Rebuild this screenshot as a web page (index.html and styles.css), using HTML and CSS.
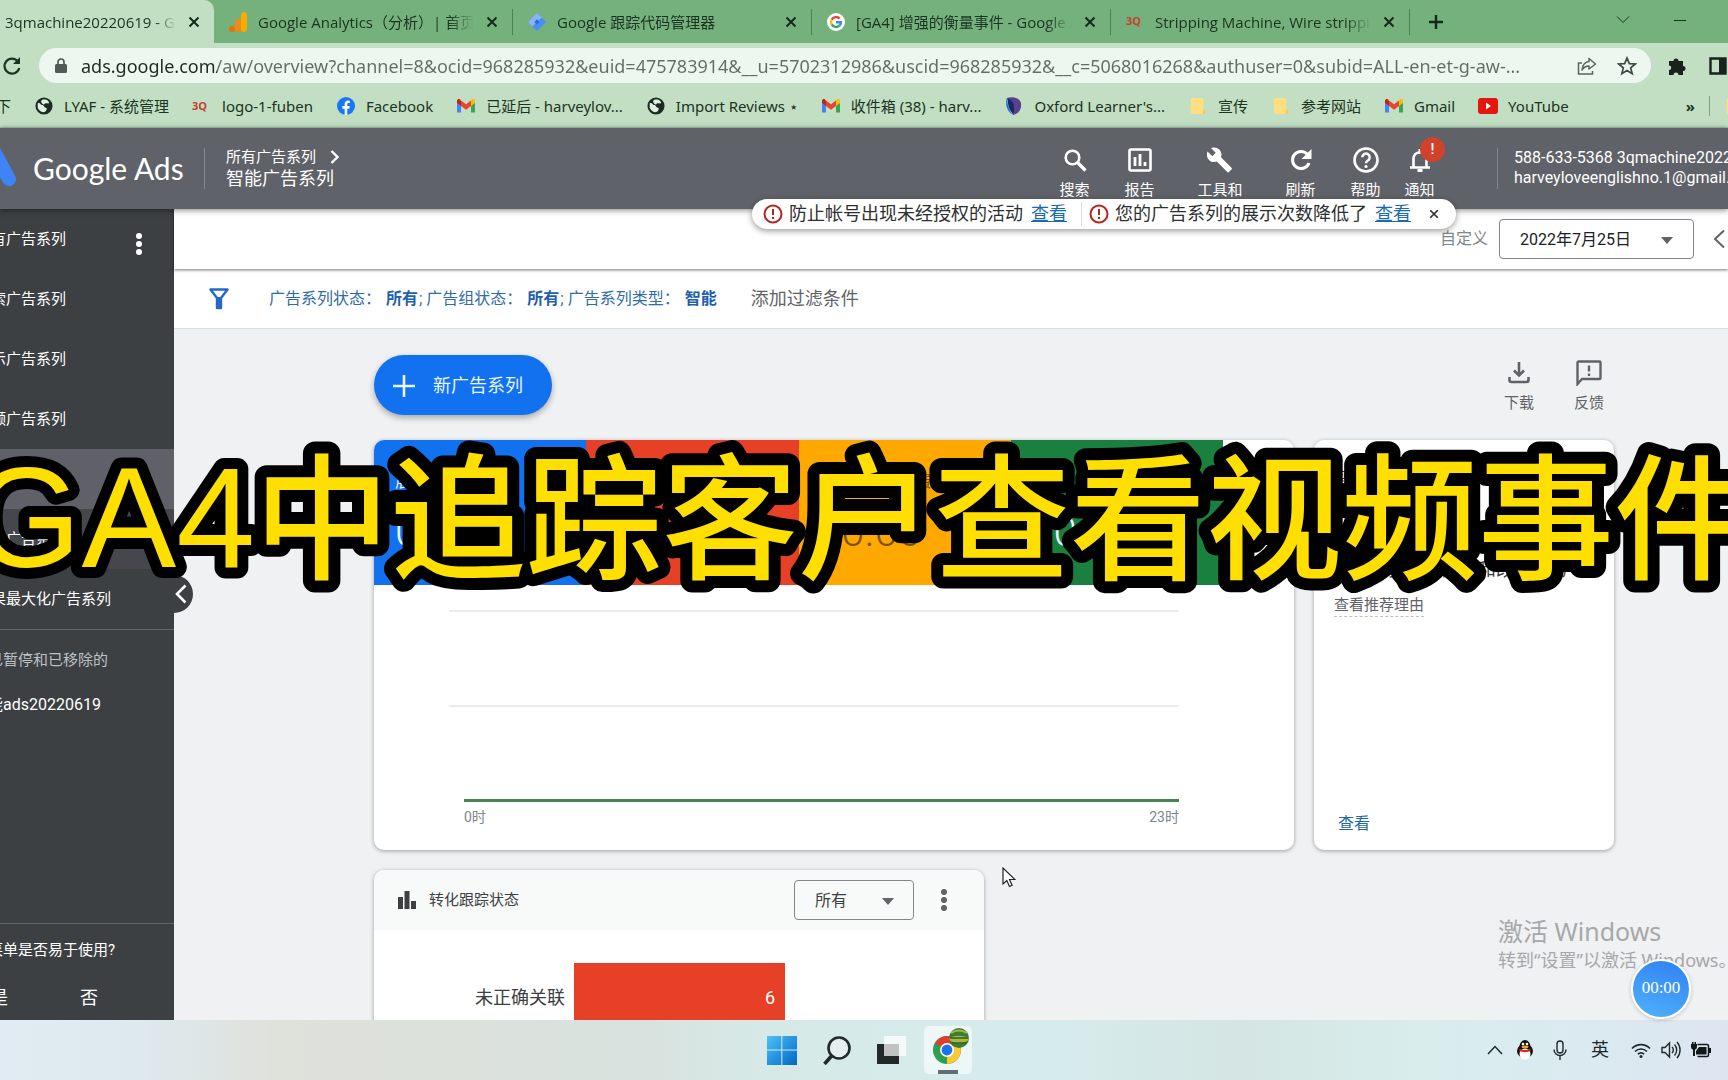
FILE: index.html
```html
<!DOCTYPE html>
<html lang="zh-CN">
<head>
<meta charset="utf-8">
<title>Google Ads</title>
<link rel="stylesheet" href="styles.css">
</head>
<body>
<svg class="defs" aria-hidden="true">
  <symbol id="i-close" viewBox="0 0 12 12"><path d="M1.500 1.500l9 9M10.500 1.500l-9 9" fill="none" stroke="currentColor" stroke-width="2"/></symbol>
  <symbol id="i-gmail" viewBox="0 0 20 16"><path d="M1 3v11.500h4V7z" fill="#4285f4"/><path d="M19 3v11.500h-4V7z" fill="#34a853"/><path d="M15 2.500V8l4-3V3c0-2-2-2.500-3-1.500z" fill="#fbbc04"/><path d="M1 3v2l4 3V2.500L4 1.500C3 .5 1 1 1 3z" fill="#c5221f"/><path d="M5 2.500V8l5 3.800L15 8V2.500l-5 3.800z" fill="#ea4335"/></symbol>
  <symbol id="i-globe" viewBox="0 0 20 20"><circle cx="10" cy="10" r="9.500" fill="#1c2a22"/><path d="M3 7c3-1 3 2 5 2s2 3 4 3 1 4-2 5c-3 0-6-2-7-5z" fill="#dff0e0"/><path d="M8 3c2 0 5-1 7 2s-1 2-3 2-1 2-3 1-3-4-1-5z" fill="#dff0e0"/></symbol>
  <symbol id="i-folder" viewBox="0 0 18 20"><path d="M2 1h11a2 2 0 0 1 2 2v10l2 3v3H3a2 2 0 0 1-2-2V2z" fill="#ffdf80"/><path d="M15 13l2 3v3h-3z" fill="#f4c95c"/></symbol>
  <symbol id="i-alert" viewBox="0 0 20 20"><circle cx="10" cy="10" r="8.500" fill="none" stroke="#b3261e" stroke-width="2"/><path d="M10 5v6M10 13v2" stroke="#b3261e" stroke-width="2"/></symbol>
  <symbol id="i-dots" viewBox="0 0 6 22"><circle cx="3" cy="3" r="3" fill="currentColor"/><circle cx="3" cy="11" r="3" fill="currentColor"/><circle cx="3" cy="19" r="3" fill="currentColor"/></symbol>
</svg>

<div class="tabs">
  <div class="tab tab-active"><span class="tab-title">3qmachine20220619 - Goo</span><button class="tab-close" aria-label="关闭"><svg width="12" height="12"><use href="#i-close"/></svg></button></div>
  <div class="tab">
    <svg class="fav" viewBox="0 0 18 20"><rect x="12" y="0" width="6" height="20" rx="3" fill="#f9ab00"/><rect x="6" y="7" width="6" height="13" rx="2" fill="#ee8a1d"/><circle cx="3" cy="17" r="3" fill="#e37400"/></svg>
    <span class="tab-title">Google Analytics（分析）| 首页</span><button class="tab-close" aria-label="关闭"><svg width="12" height="12"><use href="#i-close"/></svg></button></div>
  <div class="tab">
    <svg class="fav" viewBox="0 0 20 20"><path d="M10 0l10 10-10 10L0 10z" fill="#4a8df6"/><path d="M10 0L0 10l5 5L15 5z" fill="#8ab4f8"/><path d="M10 7l3 3-3 3-3-3z" fill="#246fdb"/></svg>
    <span class="tab-title">Google 跟踪代码管理器</span><button class="tab-close" aria-label="关闭"><svg width="12" height="12"><use href="#i-close"/></svg></button></div>
  <div class="tab">
    <svg class="fav" viewBox="0 0 20 20"><circle cx="10" cy="10" r="10" fill="#fff"/><g fill="none" stroke-width="2.600"><path d="M14 6.200A5.500 5.500 0 0 0 5.200 7.300" stroke="#ea4335"/><path d="M5.200 7.300a5.500 5.500 0 0 0 0 5.400" stroke="#fbbc04"/><path d="M5.200 12.700a5.500 5.500 0 0 0 8.600 1.400" stroke="#34a853"/><path d="M13.800 14.100A5.500 5.500 0 0 0 15.500 10.300H10" stroke="#4285f4"/></g></svg>
    <span class="tab-title">[GA4] 增强的衡量事件 - Google A</span><button class="tab-close" aria-label="关闭"><svg width="12" height="12"><use href="#i-close"/></svg></button></div>
  <div class="tab">
    <span class="fav mark">3Q</span>
    <span class="tab-title">Stripping Machine, Wire strippin</span><button class="tab-close" aria-label="关闭"><svg width="12" height="12"><use href="#i-close"/></svg></button></div>
  <button class="tab-new" aria-label="新标签页"><svg width="16" height="16" viewBox="0 0 16 16"><path d="M8 1v14M1 8h14" stroke="currentColor" stroke-width="2.400"/></svg></button>
  <div class="win">
    <svg width="14" height="10" viewBox="0 0 14 10"><path d="M1 1.500l6 6 6-6" fill="none" stroke="currentColor"/></svg>
    <svg width="14" height="10" viewBox="0 0 14 10"><path d="M1 5.500h12" stroke="currentColor"/></svg>
  </div>
</div>

<div class="toolbar">
  <button class="plain" aria-label="重新加载"><svg width="20" height="20" viewBox="0 0 20 20"><path d="M16 5.500A7.500 7.500 0 1 0 17.300 12" fill="none" stroke="currentColor" stroke-width="2.200"/><path d="M18 1v7h-7z" fill="currentColor"/></svg></button>
  <div class="omnibox">
    <svg width="12" height="16" viewBox="0 0 12 16"><rect y="6" width="12" height="9" rx="1.500" fill="#4f5b54"/><path d="M3 7V4a3 3 0 0 1 6 0v3" fill="none" stroke="#4f5b54" stroke-width="1.700"/></svg>
    <input class="url" type="text" aria-label="地址" value="ads.google.com/aw/overview?channel=8&amp;ocid=968285932&amp;euid=475783914&amp;__u=5702312986&amp;uscid=968285932&amp;__c=5068016268&amp;authuser=0&amp;subid=ALL-en-et-g-aw-...">
    <svg width="20" height="20" viewBox="0 0 20 20"><path d="M5 7H1.500v11h14v-3" fill="none" stroke="#59645d" stroke-width="1.500"/><path d="M12 2.500l6.500 5.500-6.500 5v-3c-3 0-5 1-7 4 .5-5 3-8 7-8.500z" fill="none" stroke="#59645d" stroke-width="1.500" stroke-linejoin="round"/></svg>
    <svg width="20" height="20" viewBox="0 0 20 20"><path d="M10 2l2.300 5.600 6 .4-4.600 3.900 1.500 5.900L10 14.600l-5.200 3.200 1.500-5.900L1.700 8l6-.4z" fill="none" stroke="#3f4943" stroke-width="1.700"/></svg>
  </div>
  <svg width="18" height="20" viewBox="0 0 18 20"><path d="M1 5h4.500a2.500 2.500 0 1 1 5 0H15v5a2.500 2.500 0 0 1 0 5v4h-4.500a2.500 2.500 0 0 0-5 0H1v-5a2.200 2.200 0 0 0 0-4.500z" fill="#18231c"/></svg>
  <svg width="18" height="18" viewBox="0 0 18 18"><path d="M1.500 1.500h15v15h-15z" fill="none" stroke="#18231c" stroke-width="2.400"/><path d="M10 1h7v16h-7z" fill="#18231c"/></svg>
</div>

<nav class="bookmarks">
  <a href="#">下</a>
  <a href="#"><svg class="bm" viewBox="0 0 20 20"><use href="#i-globe"/></svg>LYAF - 系统管理</a>
  <a href="#"><span class="bm mark">3Q</span>logo-1-fuben</a>
  <a href="#"><svg class="bm" viewBox="0 0 20 20"><circle cx="10" cy="10" r="10" fill="#1877f2"/><path d="M8.500 20v-7H6v-3h2.500V8c0-2.700 1.500-4 3.800-4l1.900.2v2.600h-1.300c-1.200 0-1.500.6-1.500 1.400V10h2.800l-.5 3h-2.300v7z" fill="#fff"/></svg>Facebook</a>
  <a href="#"><svg class="bm" viewBox="0 0 20 16"><use href="#i-gmail"/></svg>已延后 - harveylov...</a>
  <a href="#"><svg class="bm" viewBox="0 0 20 20"><use href="#i-globe"/></svg>Import Reviews ⋆</a>
  <a href="#"><svg class="bm" viewBox="0 0 20 16"><use href="#i-gmail"/></svg>收件箱 (38) - harv...</a>
  <a href="#"><svg class="bm" viewBox="0 0 20 20"><path d="M2 1c9-2 16 1 16 8 0 6-4 10-9 11z" fill="#5b3f8c"/><path d="M2 1c1 6 1 12 7 19C2 16 0 8 2 1z" fill="#1c6fd0"/><path d="M3 2c6 2 9 8 6 17C4 14 3 8 3 2z" fill="#122a6b"/></svg>Oxford Learner's...</a>
  <a href="#"><svg class="bm" viewBox="0 0 18 20"><use href="#i-folder"/></svg>宣传</a>
  <a href="#"><svg class="bm" viewBox="0 0 18 20"><use href="#i-folder"/></svg>参考网站</a>
  <a href="#"><svg class="bm" viewBox="0 0 20 16"><use href="#i-gmail"/></svg>Gmail</a>
  <a href="#"><svg class="bm" viewBox="0 0 20 16"><rect width="20" height="16" rx="3" fill="#e5160b"/><path d="M8 4.500l5 3.500-5 3.500z" fill="#fff"/></svg>YouTube</a>
  <div class="more"><b>»</b><i></i><svg class="bm" viewBox="0 0 18 20"><use href="#i-folder"/></svg></div>
</nav>

<header class="header">
  <svg class="logo" width="18" height="40" viewBox="0 0 18 40"><path d="M-8 0l17 31" stroke="#3f83f8" stroke-width="14" stroke-linecap="round"/></svg>
  <span class="brand">Google Ads</span>
  <div class="crumbs">
    <a href="#">所有广告系列 <svg width="9" height="14" viewBox="0 0 9 14"><path d="M1.500 1l6 6-6 6" fill="none" stroke="#fff" stroke-width="2.400"/></svg></a>
    <span class="crumb-now">智能广告系列</span>
  </div>
  <div class="tools">
    <button><svg viewBox="0 0 26 26"><circle cx="10.500" cy="10.500" r="6.800" fill="none" stroke="#fff" stroke-width="2.600"/><path d="M15.500 15.500l8 8" stroke="#fff" stroke-width="3.200"/></svg>搜索</button>
    <button><svg viewBox="0 0 26 26"><rect x="2.500" y="2.500" width="21" height="21" rx="1.500" fill="none" stroke="#fff" stroke-width="2.600"/><path d="M8 10v9M13 7v12M18 15v4" stroke="#fff" stroke-width="2.800"/></svg>报告</button>
    <button class="wide"><svg viewBox="0 0 26 26"><path d="M24.500 20.700L14 10.300c1-2.700.4-5.700-1.700-7.800C10 .3 6.600-.2 3.900 1.100l4.800 4.700-3.400 3.400L.5 4.500c-1.200 2.700-.8 6.100 1.500 8.400 2.100 2.100 5.200 2.700 7.800 1.700l10.500 10.500c.5.500 1.200.5 1.600 0l2.600-2.700c.6-.5.600-1.300 0-1.700z" fill="#fff"/></svg>工具和</button>
    <button><svg viewBox="0 0 26 26"><path d="M19.500 7.500A8.500 8.500 0 1 0 21 16" fill="none" stroke="#fff" stroke-width="3"/><path d="M23.500 2v10h-10z" fill="#fff"/></svg>刷新</button>
    <button><svg viewBox="0 0 26 26"><circle cx="13" cy="13" r="11.500" fill="none" stroke="#fff" stroke-width="2.600"/><path d="M9.300 10.300a3.700 3.700 0 1 1 5.600 3.200c-1.300.8-1.900 1.300-1.900 2.800" fill="none" stroke="#fff" stroke-width="2.500"/><circle cx="13" cy="19.500" r="1.600" fill="#fff"/></svg>帮助</button>
    <button class="narrow"><svg viewBox="0 0 26 26"><path d="M6.500 20v-8c0-4 2.500-6.500 6.500-6.500s6.500 2.500 6.500 6.500v8M3 20.500h20" fill="none" stroke="#fff" stroke-width="2.600"/><path d="M13 2v4M10.500 23.500h5" stroke="#fff" stroke-width="3"/></svg>通知<span class="badge">!</span></button>
  </div>
  <div class="account"><span>588-633-5368 3qmachine20220619</span><span>harveyloveenglishno.1@gmail.com</span></div>
  <div class="notice">
    <svg width="20" height="20"><use href="#i-alert"/></svg><span>防止帐号出现未经授权的活动</span><a href="#">查看</a>
    <i></i>
    <svg width="20" height="20"><use href="#i-alert"/></svg><span>您的广告系列的展示次数降低了</span><a href="#">查看</a>
    <button class="plain notice-close" aria-label="关闭"><svg width="10" height="10"><use href="#i-close"/></svg></button>
  </div>
</header>

<div class="work">
  <aside class="side">
    <button class="plain side-menu" aria-label="更多"><svg width="6" height="22"><use href="#i-dots"/></svg></button>
    <nav>
      <a href="#">所有广告系列</a>
      <a href="#">搜索广告系列</a>
      <a href="#">展示广告系列</a>
      <a href="#">视频广告系列</a>
      <a href="#" class="on">智能广告系列</a>
      <a href="#" class="sub">所有广告系列</a>
      <a href="#">效果最大化广告系列</a>
    </nav>
    <p class="side-group">已暂停和已移除的</p>
    <a href="#" class="side-camp">智能ads20220619</a>
    <div class="side-ask">
      <p>菜单是否易于使用?</p>
      <div class="side-answers"><button class="plain">是</button><button class="plain">否</button></div>
    </div>
  </aside>
  <button class="collapse" aria-label="收起"><svg width="12" height="20" viewBox="0 0 12 20"><path d="M10.500 1.500L2 10l8.500 8.500" fill="none" stroke="#fff" stroke-width="2.600"/></svg></button>

  <main class="main">
    <div class="datebar">
      <span>自定义</span>
      <button class="date">2022年7月25日<i class="caret"></i></button>
      <svg class="prev" width="12" height="20" viewBox="0 0 12 20"><path d="M11 1.500L2 10l9 8.500" fill="none" stroke="#5f6368" stroke-width="2"/></svg>
    </div>
    <div class="filters">
      <svg width="20" height="22" viewBox="0 0 20 22"><path d="M1.500 1.500h17L12 10v10H8V10z" fill="none" stroke="#2668c8" stroke-width="2.400" stroke-linejoin="round"/><path d="M8 9h4v11H8z" fill="#2668c8"/></svg>
      <p>广告系列状态： <b>所有</b>; 广告组状态： <b>所有</b>; 广告系列类型： <b>智能</b></p>
      <a href="#">添加过滤条件</a>
    </div>

    <div class="content">
      <div class="actions">
        <button class="fab"><svg width="22" height="22" viewBox="0 0 22 22"><path d="M11 0v22M0 11h22" stroke="currentColor" stroke-width="2.600"/></svg>新广告系列</button>
        <button class="act"><svg width="26" height="26" viewBox="0 0 26 26"><path d="M13 2v13M8 10.500l5 5 5-5M3.500 17v3a2 2 0 0 0 2 2h15a2 2 0 0 0 2-2v-3" fill="none" stroke="#5f6368" stroke-width="2.600"/></svg>下载</button>
        <button class="act"><svg width="26" height="26" viewBox="0 0 26 26"><path d="M1.500 24V2.500a1 1 0 0 1 1-1h21a1 1 0 0 1 1 1V18a1 1 0 0 1-1 1H6z" fill="none" stroke="#5f6368" stroke-width="2.400"/><path d="M13 5.500v6M13 13.500v2.600" stroke="#5f6368" stroke-width="2.400"/></svg>反馈</button>
      </div>

      <div class="cards">
        <section class="card overview">
          <div class="tiles">
            <div class="tile blue"><span>展示次数</span><strong>0</strong></div>
            <div class="tile red"><span>点击次数</span><strong>0</strong></div>
            <div class="tile amber"><span>平均每次点击费用</span><strong>¥0.00</strong></div>
            <div class="tile green"><span>费用</span><strong>¥0.00</strong></div>
          </div>
          <div class="chart">
            <div class="grid-line"></div>
            <div class="grid-line"></div>
            <div class="series"></div>
            <div class="axis"><span>0时</span><span>23时</span></div>
          </div>
        </section>
        <section class="card tip">
          <h2>您的优化得分</h2>
          <h3>获取更多广告点击和改进服务</h3>
          <span class="reason">查看推荐理由</span>
          <a href="#">查看</a>
        </section>
      </div>

      <section class="card track">
        <div class="track-head">
          <svg width="18" height="18" viewBox="0 0 18 18"><path d="M0 6h5v12H0zM6.500 0h5v18h-5zM13 10h5v8h-5z" fill="#3c4043"/></svg>
          <h2>转化跟踪状态</h2>
          <label class="pick"><select aria-label="状态"><option>所有</option></select><i class="caret"></i></label>
          <button class="plain" aria-label="更多"><svg width="6" height="22"><use href="#i-dots"/></svg></button>
        </div>
        <div class="track-row"><span>未正确关联</span><div class="bar">6</div></div>
      </section>
    </div>
  </main>
</div>

<footer class="taskbar">
  <div class="apps">
    <svg width="30" height="30" viewBox="0 0 30 30"><defs><linearGradient id="w" x2="1" y2="1"><stop stop-color="#4cc2f7"/><stop offset="1" stop-color="#0067c8"/></linearGradient></defs><path d="M0 1h14.300v13.500H0zM15.300 1H30v13.500H15.300zM0 15.500h14.300V30H0zM15.300 15.500H30V30H15.300z" fill="url(#w)"/></svg>
    <svg width="30" height="30" viewBox="0 0 30 30"><circle cx="17" cy="13" r="10.500" fill="#e6eeee" stroke="#1f2a2c" stroke-width="2.600"/><path d="M9.500 21L2.500 29" stroke="#1f2a2c" stroke-width="3.600"/></svg>
    <svg width="30" height="30" viewBox="0 0 30 30"><path d="M0 9h22v20H0z" fill="#23282a"/><path d="M7 1h22v20H7z" fill="#fff" fill-opacity=".72"/></svg>
    <div class="app-on">
      <svg width="36" height="38" viewBox="0 0 36 38"><circle cx="14" cy="22" r="14" fill="#2f9e4f"/><path d="M14 22L2 15a14 14 0 0 1 24-0.500z" fill="#e33b2e"/><path d="M14 22l12-7a14 14 0 0 1-12 21z" fill="#fcc934"/><circle cx="14" cy="22" r="7" fill="#fff"/><circle cx="14" cy="22" r="5.400" fill="#1a73e8"/><circle cx="26" cy="10" r="10" fill="#3f7d35"/><path d="M18 5c5-3 11-3 16 0" fill="none" stroke="#a8b93c" stroke-width="2"/><path d="M16.500 10c6-3 12-3 19 0v2c-6 5-13 5-19 0z" fill="#a8b93c"/><path d="M17 10h18M19 15h14" stroke="#2c5f2a" stroke-width="1.500"/></svg>
    </div>
  </div>
  <div class="tray">
    <svg width="16" height="10" viewBox="0 0 16 10"><path d="M1 9l7-7.500L15 9" fill="none" stroke="#1f2a2c" stroke-width="1.500"/></svg>
    <svg width="16" height="20" viewBox="0 0 16 20"><ellipse cx="8" cy="11" rx="8" ry="7" fill="#111"/><ellipse cx="8" cy="6.500" rx="5.500" ry="6.500" fill="#111"/><ellipse cx="8" cy="14" rx="5.500" ry="5.500" fill="#fff"/><path d="M2.500 8.500c3 2 8 2 11 0v2.500c-3 1.500-8 1.500-11 0z" fill="#e2231a"/><ellipse cx="8" cy="7" rx="3.500" ry="1.400" fill="#f7a11a"/><circle cx="6" cy="4" r="1.300" fill="#fff"/><circle cx="10" cy="4" r="1.300" fill="#fff"/></svg>
    <svg width="14" height="20" viewBox="0 0 14 20"><rect x="4" y="1" width="6" height="12" rx="3" fill="none" stroke="#1f2a2c" stroke-width="1.400"/><path d="M1 9.500a6 6 0 0 0 12 0M7 15.500V20" fill="none" stroke="#1f2a2c" stroke-width="1.400"/></svg>
    <span>英</span>
    <svg width="20" height="16" viewBox="0 0 20 16"><path d="M1 6.500a12.500 12.500 0 0 1 18 0M4 9.500a8.500 8.500 0 0 1 12 0M6.800 12.200a4.500 4.500 0 0 1 6.400 0" fill="none" stroke="#1f2a2c" stroke-width="1.600"/><circle cx="10" cy="14.500" r="1.500" fill="#1f2a2c"/></svg>
    <svg width="20" height="18" viewBox="0 0 20 18"><path d="M1 6.500h3L8.500 2v14L4 11.500H1z" fill="none" stroke="#1f2a2c" stroke-width="1.400"/><path d="M11 6a4 4 0 0 1 0 6M13.500 3.500a8 8 0 0 1 0 11M16 1a12 12 0 0 1 0 16" fill="none" stroke="#1f2a2c" stroke-width="1.400"/></svg>
    <svg width="20" height="16" viewBox="0 0 20 16"><path d="M6.500 2.500H16a1.500 1.500 0 0 1 1.500 1.500v9a1.500 1.500 0 0 1-1.500 1.500H6.500" fill="none" stroke="#10181a" stroke-width="1.500"/><path d="M8 5h7.500v7.500H5V9zM18 6h2v5h-2zM0 2h6v3a3 3 0 0 1-2 2.800V14H2V7.800A3 3 0 0 1 0 5zM1 0h1.500v2H1zM3.500 0H5v2H3.500z" fill="#10181a"/></svg>
  </div>
</footer>

<div class="watermark"><span>激活 Windows</span><small>转到“设置”以激活 Windows。</small></div>
<div class="timer">00:00</div>
<svg class="cursor" width="14" height="21" viewBox="0 0 14 21"><path d="M1 1v16l3.800-3.500L7.500 19.500l2.600-1.200-2.600-5.800H13z" fill="#fff" stroke="#222" stroke-width="1.200"/></svg>
<svg class="caption"><text x="-29" y="137"><tspan class="latin">GA4</tspan><tspan x="254" y="139">中追踪客户查看视频事件</tspan></text></svg>
</body>
</html>
```
FILE: styles.css
```css
* { box-sizing: border-box; margin: 0; padding: 0; }
body {
  position: relative;
  display: flex;
  flex-direction: column;
  height: 100vh;
  overflow: hidden;
  font: 15px/20px Roboto, "Noto Sans CJK SC", sans-serif;
  color: #3c4043;
}
a { color: inherit; text-decoration: none; white-space: nowrap; }
button, input, select { font: inherit; color: inherit; border: 0; background: none; }
svg { display: block; flex: none; }
i { font-style: normal; }
.defs { position: absolute; width: 0; height: 0; }
.plain { display: flex; align-items: center; }
.mark { color: #c5402f; font: bold 11px/18px "Open Sans", sans-serif; }

/* browser frame */
.tabs, .toolbar, .bookmarks {
  display: flex;
  align-items: center;
  flex: none;
  font-family: "Open Sans", "Noto Sans CJK SC", sans-serif;
  color: #1b3321;
}
.tabs { height: 43px; background: #75b17c; }
.tab {
  display: flex;
  align-items: center;
  flex: none;
  width: 299px;
  height: 26px;
  padding: 0 14px 0 15px;
  border-right: 1px solid #4a8353;
}
.tab-active {
  width: 214px;
  height: 43px;
  padding: 0 14px 0 5px;
  border: 0;
  border-radius: 0 10px 0 0;
  background: #c2dfc4;
}
.fav { width: 18px; height: 20px; margin-right: 11px; flex: none; }
.tab-title {
  flex: 1;
  overflow: hidden;
  white-space: nowrap;
  margin-right: 12px;
  mask-image: linear-gradient(to right, #000 88%, transparent);
}
.tab-close { width: 12px; height: 12px; color: #14291a; }
.tab-new { margin-left: 18px; color: #14291a; }
.win { display: flex; gap: 43px; margin: 0 41px 4px auto; }

.toolbar { height: 46px; background: #c2dfc4; gap: 20px; overflow: hidden; padding: 0 0 1px 2px; }
.omnibox {
  display: flex;
  align-items: center;
  flex: 1;
  height: 35px;
  gap: 20px;
  margin-right: -3px;
  padding: 0 14px 0 16px;
  border-radius: 18px;
  background: #edf6ef;
}
.toolbar > .plain { margin-right: -3px; }
.toolbar > svg:last-child { margin: 0 1px 0 3px; }
.url {
  flex: 1;
  min-width: 0;
  height: 30px;
  margin-left: -6px;
  font-size: 18px;
  line-height: 30px;
  font-family: "Noto Sans", sans-serif;
  background: linear-gradient(to right, #1c2a20 136px, #626d66 136px);
  -webkit-background-clip: text;
  background-clip: text;
  color: transparent;
}
.bookmarks { height: 39px; background: #c2dfc4; gap: 23px; padding-bottom: 4px; overflow: hidden; border-bottom: 1px solid #a9c6ad; }
.bookmarks a { display: flex; align-items: center; gap: 10px; flex: none; font-family: "Noto Sans", "Noto Sans CJK SC", sans-serif; }
.bookmarks a:first-child { margin-left: -4px; }
.bm { width: 20px; height: 18px; flex: none; }
.more { display: flex; align-items: center; gap: 14px; margin: 0 -16px 0 auto; }
.more i { width: 1px; height: 20px; background: #7fa286; }

/* product header */
.header {
  position: relative;
  z-index: 3;
  display: flex;
  flex: none;
  height: 81px;
  background: #5f6268;
  color: #fff;
  box-shadow: 0 1px 6px rgba(0, 0, 0, .5);
}
.logo { margin-top: 20px; }
.brand { width: 171px; margin-left: 15px; font: 30px/80px Lato, sans-serif; white-space: nowrap; }
.crumbs { display: flex; flex-direction: column; gap: 2px; height: 41px; margin-top: 20px; padding-left: 21px; border-left: 1px solid #85888d; }
.crumbs a { display: flex; align-items: center; gap: 14px; line-height: 18px; }
.crumb-now { font-size: 18px; line-height: 22px; }
.tools { display: flex; margin-left: auto; }
.tools button {
  position: relative;
  display: flex;
  flex-direction: column;
  align-items: center;
  gap: 7px;
  width: 65px;
  padding-top: 19px;
  white-space: nowrap;
}
.tools svg { width: 26px; height: 26px; }
.tools .wide { width: 96px; }
.tools .narrow { width: 43px; }
.badge {
  position: absolute;
  top: 9px;
  right: -4px;
  width: 25px;
  height: 25px;
  border-radius: 50%;
  background: #d0432a;
  font-weight: 500;
  line-height: 25px;
}
.account {
  display: flex;
  flex-direction: column;
  flex: none;
  width: 231px;
  height: 41px;
  margin: 20px 0 0 56px;
  padding-left: 16px;
  border-left: 1px solid #85888d;
  overflow: hidden;
  white-space: nowrap;
  font-size: 16px;
}
.notice {
  position: absolute;
  top: 71px;
  right: 272px;
  display: flex;
  align-items: center;
  height: 30px;
  padding: 0 17px 0 11px;
  border-radius: 15px;
  background: #fff;
  color: #2d2f31;
  font-size: 18px;
  box-shadow: 0 2px 6px rgba(0, 0, 0, .4);
}
.notice span { margin: 0 8px 0 6px; white-space: nowrap; }
.notice a { color: #1a6bb5; text-decoration: underline; }
.notice i { width: 1px; height: 24px; margin: 0 7px 0 14px; background: #dadce0; }
.notice-close { margin-left: 18px; }

/* sidebar */
.work { position: relative; display: flex; flex: 1; min-height: 0; overflow: hidden; background: #f0f1f3; }
.side {
  position: relative;
  display: flex;
  flex-direction: column;
  flex: none;
  width: 174px;
  background: #3c4043;
  color: #fff;
  overflow: hidden;
  white-space: nowrap;
}
.side-menu { position: absolute; top: 24px; right: 32px; }
.side nav { border-bottom: 1px solid #62666a; }
.side nav a, .side-camp { display: block; text-indent: -24px; line-height: 60px; }
.side .on { background: #5f6068; }
.side .sub { background: #46474c; }
.side-group { text-indent: -12px; line-height: 60px; color: #bdc1c6; }
.side .side-camp { line-height: 30px; font-size: 16px; text-indent: -29px; }
.side-ask { height: 97px; margin-top: auto; padding-top: 16px; border-top: 1px solid #62666a; }
.side-ask p { text-indent: -12px; }
.side-answers { display: flex; gap: 72px; margin: 28px 0 0 -10px; font-size: 18px; }
.collapse {
  position: absolute;
  top: 366px;
  left: 155px;
  width: 38px;
  height: 38px;
  padding-left: 20px;
  border-radius: 50%;
  background: #3c4043;
}

/* main column */
.main { flex: 1; min-width: 0; }
.datebar {
  position: relative;
  z-index: 1;
  display: flex;
  align-items: center;
  justify-content: flex-end;
  height: 60px;
  gap: 11px;
  padding-right: 3px;
  background: #fff;
  color: #80868b;
  font-size: 16px;
  box-shadow: 0 1px 3px rgba(0, 0, 0, .55);
}
.date {
  display: flex;
  align-items: center;
  justify-content: space-between;
  width: 195px;
  height: 40px;
  padding: 2px 20px 0;
  border: 1px solid #80868b;
  border-radius: 4px;
  color: #202124;
}
.prev { margin-left: 8px; }
.caret { border: solid transparent; border-width: 7px 6px 0; border-top-color: #5f6368; }
.filters { display: flex; align-items: center; height: 60px; padding-left: 35px; background: #fff; border-bottom: 1px solid #dadce0; color: #2f6ca8; font-size: 16px; }
.filters p { margin: 0 33px 0 40px; white-space: nowrap; }
.filters b { margin: 0 1px; color: #1f5fae; }
.filters a { color: #5f6368; font-size: 18px; }
.content { padding: 26px 114px 0 200px; }
.actions { display: flex; height: 85px; }
.fab {
  display: flex;
  align-items: center;
  gap: 18px;
  height: 60px;
  margin-right: auto;
  padding: 1px 29px 0 19px;
  border-radius: 30px;
  background: #1171ee;
  color: #e8f6ff;
  font-size: 18px;
  box-shadow: 0 3px 6px rgba(0, 0, 0, .3);
}
.act { display: flex; flex-direction: column; align-items: center; gap: 7px; width: 50px; padding-top: 5px; margin-left: 20px; height: 60px; color: #5f6368; }
.card { border-radius: 10px; background: #fff; box-shadow: 0 1px 4px rgba(0, 0, 0, .35); overflow: hidden; }
.cards { display: grid; grid-template-columns: 1fr 300px; gap: 20px; height: 410px; }
.tiles { display: grid; grid-template-columns: repeat(4, 3fr) 1fr; height: 145px; }
.tile { padding: 32px 0 0 21px; font-size: 16px; color: #e6f4ff; white-space: nowrap; }
.tile strong { display: block; margin-top: 10px; font-size: 42px; font-weight: 300; line-height: 60px; }
.blue { background: #1171ee; }
.red { background: #e64026; }
.amber { background: #ffa900; color: #7a5200; }
.green { background: #1a8040; }
.chart { padding: 25px 115px 0 75px; color: #80868b; font-size: 14px; }
.grid-line { height: 95px; border-top: 2px solid #ebebeb; }
.series { height: 3px; margin: -1px 0 0 15px; background: #4a8453; }
.axis { display: flex; justify-content: space-between; padding: 5px 0 0 15px; }
.tip { display: flex; flex-direction: column; align-items: flex-start; padding: 28px 20px 16px; white-space: nowrap; }
.tip h2 { font-size: 16px; font-weight: 400; }
.tip h3 { margin-top: 72px; font-size: 18px; font-weight: 400; }
.reason { margin-top: 14px; line-height: 22px; color: #5f6368; border-bottom: 1px dashed #bdc1c6; }
.tip a { margin: auto 0 0 4px; font-size: 16px; color: #1f6aa5; }
.track { width: 610px; height: 240px; margin-top: 20px; }
.track-head { display: flex; align-items: center; height: 60px; padding: 0 37px 0 24px; background: #f8faf9; color: #5f6368; }
.track-head h2 { margin: 0 auto 0 13px; font-size: 15px; font-weight: 400; color: #3c4043; }
.pick { display: flex; align-items: center; width: 120px; height: 40px; margin-right: 27px; padding: 2px 19px 0 20px; border: 1px solid #80868b; border-radius: 4px; color: #3c4043; font-size: 16px; }
.pick select { appearance: none; flex: 1; min-width: 0; }
.track-row { display: flex; align-items: center; height: 70px; margin: 33px 0 0 101px; color: #3c4043; font-size: 18px; }
.bar { width: 211px; height: 70px; margin-left: 9px; padding-right: 10px; background: #e64026; color: #fff; line-height: 70px; text-align: right; }

/* desktop */
.taskbar {
  position: relative;
  display: flex;
  align-items: center;
  justify-content: center;
  flex: none;
  height: 60px;
  background: linear-gradient(to right, #e0ebf3 0, #dee9ee 8%, #dfe1db 16%, #dbe1dc 30%, #d8e3df 38%, #d6e9e7 44%, #d6ecec 60%, #d4e5e3 72%, #d8edec 82%, #dbeaf1 92%, #dde5f0);
}
.apps { display: flex; align-items: center; gap: 25px; margin-left: 10px; }
.app-on { display: flex; justify-content: center; width: 48px; height: 48px; margin-left: -8px; padding: 2px 0 0 6px; border-radius: 5px; background: linear-gradient(#5d6f74, #5d6f74) 50% 100% / 20px 4px no-repeat #eef7f7; }
.tray { position: absolute; right: 17px; display: flex; align-items: center; gap: 14px; color: #1f2a2c; font-size: 18px; }
.tray svg:nth-child(2) { margin-right: 6px; }
.tray span { margin: 0 8px 0 10px; }
.tray svg:nth-child(6) { margin: 0 -4px; }

.watermark { position: absolute; right: -4px; bottom: 108px; display: flex; flex-direction: column; color: #a6a8aa; font-family: "Noto Sans", "Noto Sans CJK SC", sans-serif; white-space: nowrap; width: 234px; }
.watermark span { font-size: 25px; line-height: 34px; }
.watermark small { font-size: 18px; line-height: 24px; }
.timer { position: absolute; z-index: 4; right: 37px; bottom: 61px; width: 60px; height: 60px; border: 2px solid #fff; border-radius: 50%; background: linear-gradient(20deg, #50b2fb, #2f80f2); color: #fff; font: 17px/54px "Liberation Serif", serif; text-align: center; box-shadow: 0 1px 4px rgba(0, 0, 0, .2); }
.cursor { position: absolute; left: 1002px; top: 867px; }
.caption { position: absolute; z-index: 5; left: 0; top: 430px; width: 100%; height: 180px; overflow: hidden; pointer-events: none; }
.caption text { font: 500 136px "Noto Sans CJK SC", sans-serif; fill: #ffdf00; stroke: #000; stroke-width: 24px; stroke-linejoin: round; paint-order: stroke; }
.caption .latin { font: 142px "Liberation Sans", sans-serif; stroke-width: 22px; }
```
